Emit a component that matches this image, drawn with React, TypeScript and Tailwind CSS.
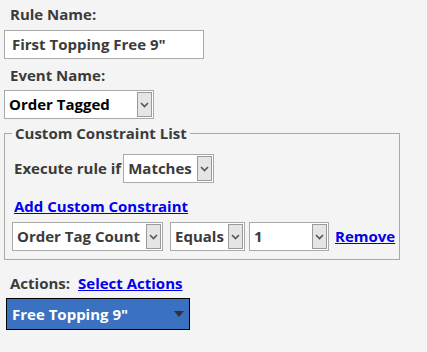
import React from "react";

function Chevron() {
  return (
    <svg width="9" height="6" viewBox="0 0 9 6">
      <path d="M1 1 L4.5 4.5 L8 1" fill="none" stroke="#555" strokeWidth="1.6" />
    </svg>
  );
}

function Select({ value, width, bold }: { value: string; width: number; bold?: boolean }) {
  return (
    <div
      className="flex h-[29px] shrink-0 items-center justify-between border border-[#a9a9a9] bg-white pl-[4px] pr-[1px]"
      style={{ width }}
    >
      <span className={bold ? "text-black" : "text-[#3b3b3b]"}>{value}</span>
      <div className="flex h-[25px] w-[15px] items-center justify-center border border-[#9a9a9a] bg-[#e5e5e5]">
        <Chevron />
      </div>
    </div>
  );
}

export default function App() {
  return (
    <div
      className="h-[352px] w-[427px] bg-[#f4f4f4] text-[15px] font-bold text-[#3b3b3b]"
      style={{ fontFamily: '"Open Sans", "Noto Sans", sans-serif' }}
    >
      <div className="px-[10px] pt-[3px] leading-[22px]">Rule Name:</div>
      <div className="ml-[4px] mt-[5px] flex h-[29px] w-[200px] items-center border border-[#a9a9a9] bg-white pl-[7px]">
        First Topping Free 9"
      </div>
      <div className="mt-[5px] px-[10px] leading-[22px]">Event Name:</div>
      <div className="ml-[4px] mt-[4px]">
        <Select value="Order Tagged" width={150} bold />
      </div>

      <fieldset className="ml-[4px] mt-[4px] h-[137px] w-[396px] min-w-0 border border-[#a9a9a9] pl-[7px] pr-[2px] pt-[1px]">
        <legend className="px-[3px] leading-[20px]">Custom Constraint List</legend>
        <div className="mt-[10px] flex items-center gap-[2px]">
          <span className="ml-[2px]">Execute rule if</span>
          <Select value="Matches" width={91} />
        </div>
        <div className="ml-[2px] mt-[13px] leading-[20px]">
          <a className="text-[#0000ee] underline">Add Custom Constraint</a>
        </div>
        <div className="mt-[6px] flex items-center">
          <Select value="Order Tag Count" width={151} />
          <div className="ml-[7px]">
            <Select value="Equals" width={75} />
          </div>
          <div className="ml-[4px]">
            <Select value="1" width={80} />
          </div>
          <a className="ml-[6px] text-[#0000ee] underline">Remove</a>
        </div>
      </fieldset>

      <div className="mt-[12px] flex items-center gap-[8px] px-[10px] leading-[22px]">
        <span>Actions:</span>
        <a className="text-[#0000ee] underline">Select Actions</a>
      </div>
      <div className="ml-[6px] mt-[4px] flex h-[32px] w-[184px] items-center justify-between border border-black bg-[#3a72c1] pl-[5px] pr-[5px] text-white">
        <span>Free Topping 9"</span>
        <svg width="10" height="6" viewBox="0 0 10 6">
          <path d="M0 0 L10 0 L5 6 Z" fill="#333" />
        </svg>
      </div>
    </div>
  );
}
